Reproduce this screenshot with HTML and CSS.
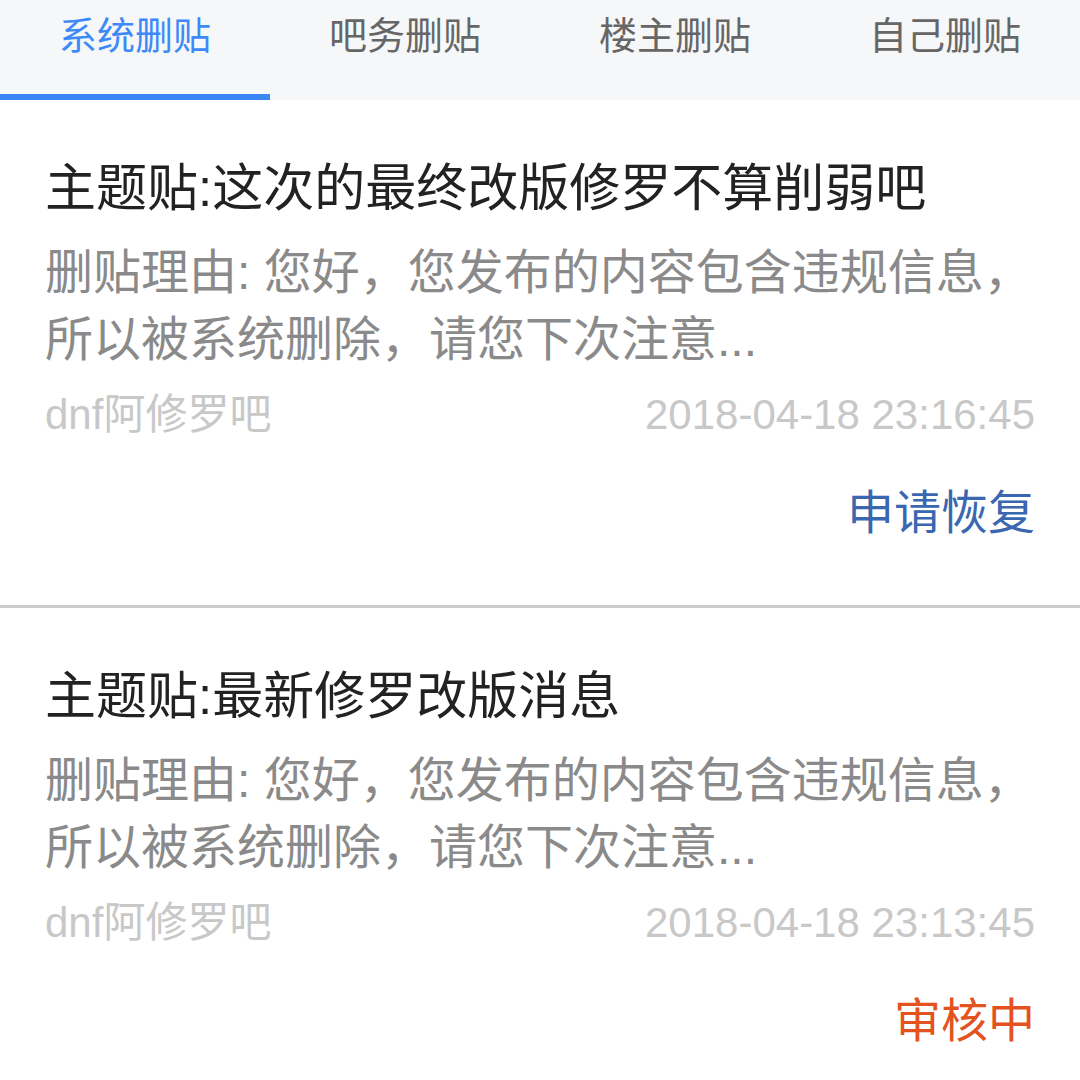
FILE: index.html
```html
<!DOCTYPE html>
<html lang="zh-CN">
<head>
    <meta charset="UTF-8">
    <meta name="viewport" content="width=device-width, initial-scale=1.0">
    <title>删贴记录</title>
    <link rel="stylesheet" href="styles.css">
</head>
<body>
    <!-- 顶部标签 -->
    <nav class="tabs">
        <div class="tab active">系统删贴</div>
        <div class="tab">吧务删贴</div>
        <div class="tab">楼主删贴</div>
        <div class="tab">自己删贴</div>
    </nav>

    <!-- 删贴列表 -->
    <div class="lista">
        <div class="card">
            <h2 class="titulo">主题贴:这次的最终改版修罗不算削弱吧</h2>
            <p class="motivo">删贴理由: 您好，您发布的内容包含违规信息，所以被系统删除，请您下次注意...</p>
            <div class="meta">
                <span>dnf阿修罗吧</span>
                <span>2018-04-18 23:16:45</span>
            </div>
            <div class="acao azul">申请恢复</div>
        </div>

        <div class="card">
            <h2 class="titulo">主题贴:最新修罗改版消息</h2>
            <p class="motivo">删贴理由: 您好，您发布的内容包含违规信息，所以被系统删除，请您下次注意...</p>
            <div class="meta">
                <span>dnf阿修罗吧</span>
                <span>2018-04-18 23:13:45</span>
            </div>
            <div class="acao laranja">审核中</div>
        </div>
    </div>
</body>
</html>
```

FILE: styles.css
```css
* {
    margin: 0;
    padding: 0;
    box-sizing: border-box;
}

body {
    background-color: #fff;
    font-family: "Liberation Sans", "Noto Sans CJK SC", sans-serif;
    color: #222;
}

/* Tabs */
.tabs {
    display: flex;
    height: 100px;
    background-color: #f6f7f9;
}

.tab {
    flex: 1;
    text-align: center;
    font-size: 38px;
    line-height: 50px;
    padding-top: 11px;
    color: #666;
}

.tab.active {
    color: #3d8af7;
    box-shadow: inset 0 -6px 0 #3a86f5;
}

/* Cards */
.card {
    padding: 58px 45px 64px 45px;
    border-bottom: 3px solid #cccccc;
}

.titulo {
    font-size: 51px;
    font-weight: normal;
    line-height: 62px;
    color: #222;
    white-space: nowrap;
}

.motivo {
    margin-top: 19px;
    font-size: 48px;
    line-height: 67px;
    color: #8a8a8a;
}

.meta {
    display: flex;
    justify-content: space-between;
    margin-top: 17px;
    font-size: 42px;
    line-height: 50px;
    color: #c8c8c8;
}

.acao {
    margin-top: 45px;
    text-align: right;
    font-size: 47px;
    line-height: 56px;
}

.azul {
    color: #3a67b0;
}

.laranja {
    color: #e4521d;
}
```
